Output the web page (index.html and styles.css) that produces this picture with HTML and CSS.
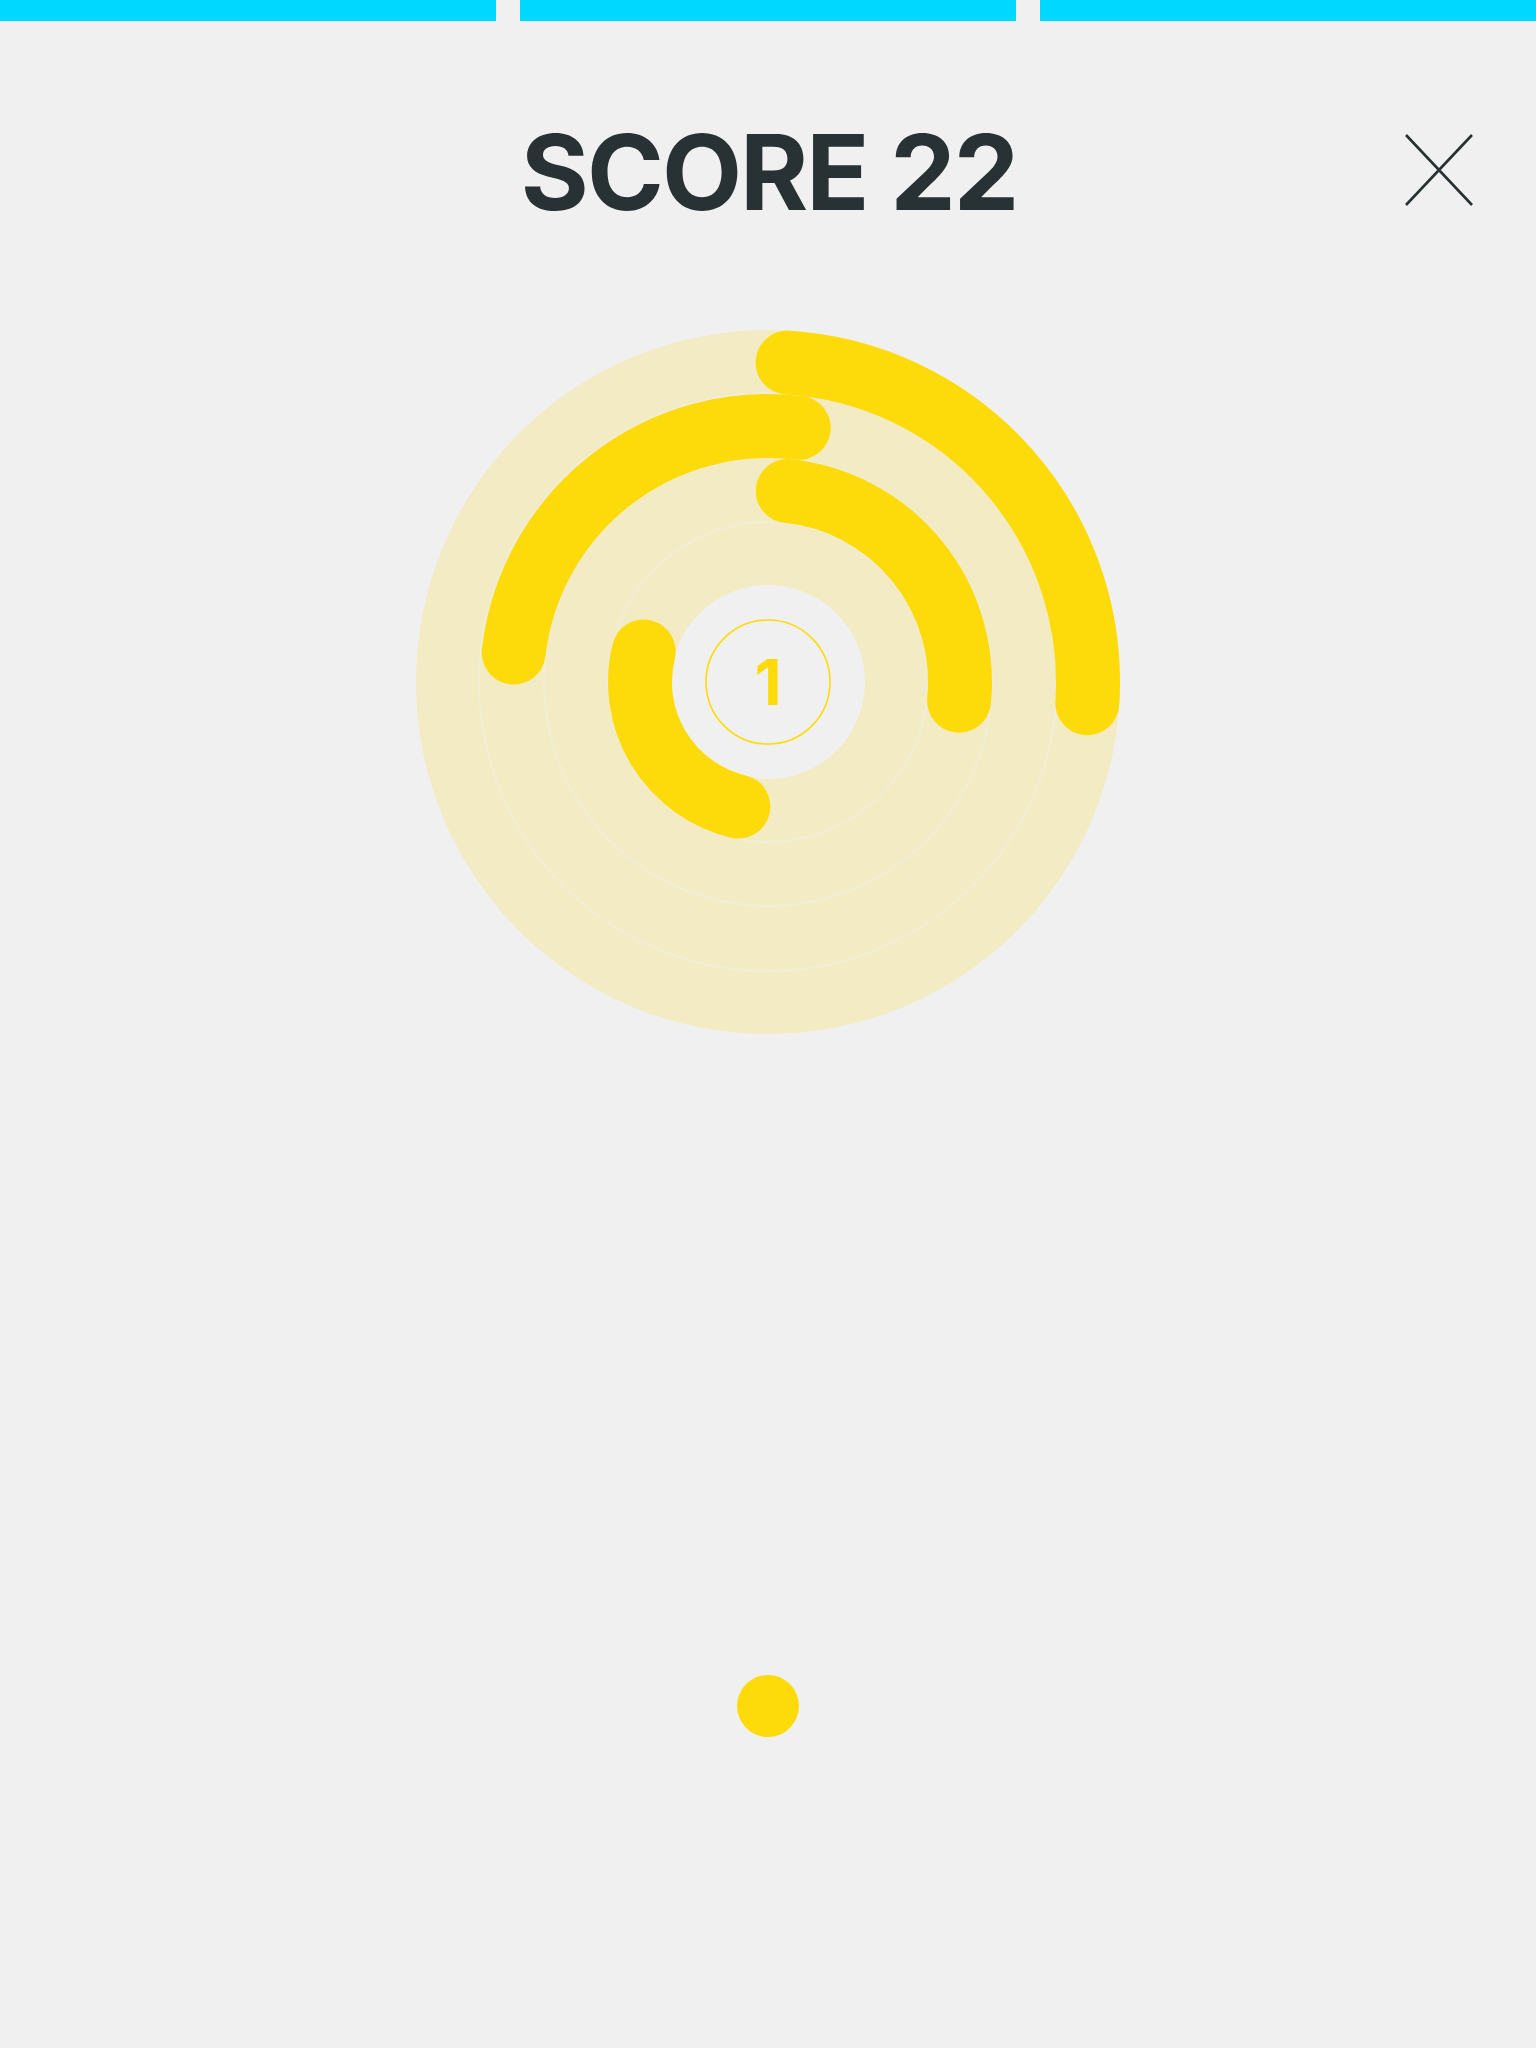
FILE: index.html
```html
<!DOCTYPE html>
<html lang="en">
<head>
<meta charset="utf-8">
<title>Score 22</title>
<link rel="stylesheet" href="styles.css">
</head>
<body>
<div class="progress">
  <div class="progress-seg"></div>
  <div class="progress-seg"></div>
  <div class="progress-seg"></div>
</div>
<header class="header">
  <div class="header-side"></div>
  <h1 class="title">SCORE 22</h1>
  <div class="header-side header-right">
    <button class="close" aria-label="Close">
      <svg width="70" height="72" viewBox="0 0 70 72">
        <path d="M2 1 L68 71 M68 1 L2 71" stroke="#283133" stroke-width="2.6" fill="none"/>
      </svg>
    </button>
  </div>
</header>
<main class="board">
  <svg class="rings" width="704" height="704" viewBox="0 0 704 704">
    <circle cx="352" cy="352" r="352" fill="#F2EBC3"/>
    <circle cx="352" cy="352" r="289" fill="none" stroke="#F1EDD6" stroke-width="2"/>
    <circle cx="352" cy="352" r="224" fill="none" stroke="#F1EDD6" stroke-width="2"/>
    <circle cx="352" cy="352" r="160" fill="none" stroke="#F1EDD6" stroke-width="2"/>
    <circle cx="352" cy="352" r="97" fill="#F0F0F0"/>
    <g fill="none" stroke="#FDDB0A" stroke-width="64" stroke-linecap="round">
      <path d="M371.54 32.60 A320 320 0 0 1 671.30 373.21"/>
      <path d="M97.70 322.58 A256 256 0 0 1 382.76 97.85"/>
      <path d="M371.74 161.02 A192 192 0 0 1 543.08 370.74"/>
      <path d="M322.34 476.52 A128 128 0 0 1 227.70 321.47"/>
    </g>
    <circle cx="352" cy="352" r="62" fill="none" stroke="#FDDB0A" stroke-width="1.6"/>
    <text class="level" x="352" y="375" text-anchor="middle">1</text>
  </svg>
</main>
<div class="ball-row">
  <div class="ball"></div>
</div>
</body>
</html>
```

FILE: styles.css
```css
html, body {
  margin: 0;
  padding: 0;
  background: #F0F0F0;
}
body {
  width: 1536px;
  height: 2048px;
  font-family: "Inter", "Lato", "Liberation Sans", sans-serif;
}
.progress {
  display: flex;
  gap: 24px;
  height: 21px;
}
.progress-seg {
  flex: 1;
  background: #00D8FF;
}
.header {
  display: grid;
  grid-template-columns: 1fr auto 1fr;
  align-items: center;
  height: 106px;
  margin-top: 98px;
}
.title {
  margin: 0;
  font-size: 104px;
  line-height: 106px;
  font-weight: 700;
  color: #283133;
  letter-spacing: -2px;
  padding-left: 2px;
}
.header-right {
  display: flex;
  justify-content: flex-end;
  padding-right: 62px;
}
.close {
  border: 0;
  padding: 0;
  background: none;
  display: block;
  margin-top: -4px;
}
.close svg {
  display: block;
}
.board {
  display: flex;
  justify-content: center;
  margin-top: 105px;
}
.rings {
  display: block;
}
.level {
  font-family: "Inter", "Lato", sans-serif;
  font-weight: 700;
  font-size: 63px;
  fill: #FDDB0A;
}
.ball-row {
  display: flex;
  justify-content: center;
  margin-top: 641px;
}
.ball {
  width: 62px;
  height: 62px;
  border-radius: 50%;
  background: #FDDB0A;
}
```
